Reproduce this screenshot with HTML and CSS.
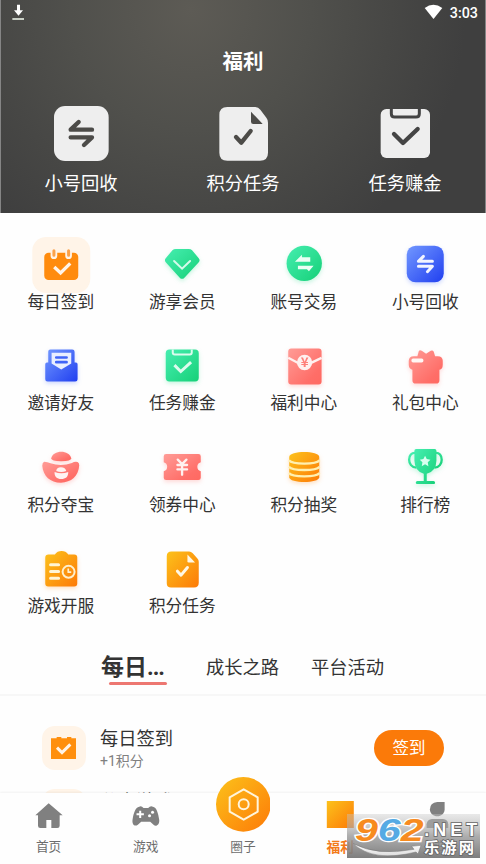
FILE: index.html
```html
<!DOCTYPE html>
<html lang="zh-CN">
<head>
<meta charset="utf-8">
<title>福利</title>
<link rel="stylesheet" href="styles.css">
</head>
<body>
<svg class="defs" width="0" height="0" aria-hidden="true">
  <defs>
    <linearGradient id="green" x1="0" y1="0" x2="1" y2="1"><stop offset="0" stop-color="#46eeb0"/><stop offset="1" stop-color="#16d078"/></linearGradient>
    <linearGradient id="blue" x1="0" y1="0" x2="1" y2="1"><stop offset="0" stop-color="#7298ff"/><stop offset="1" stop-color="#203ff0"/></linearGradient>
    <linearGradient id="red" x1="0" y1="0" x2="1" y2="1"><stop offset="0" stop-color="#ff9c97"/><stop offset=".75" stop-color="#ff6e68"/><stop offset="1" stop-color="#ff6961"/></linearGradient>
    <linearGradient id="gold" x1="0" y1="0" x2="1" y2="1"><stop offset="0" stop-color="#fcc21b"/><stop offset="1" stop-color="#fd7a07"/></linearGradient>
  </defs>
</svg>
<div class="app">
  <header class="hero">
    <div class="status">
      <svg class="download" viewBox="36 12 38 50"><path d="M51 14h9v17h9L55.500 47 42 31h9z" fill="#fff"/><path d="M37 54h35v6H37z" fill="#c9cfc6"/></svg>
      <span class="status-right">
        <svg class="wifi" viewBox="1272 12 57 46"><path d="M1274 24q26-19 53 0L1300.500 57z" fill="#fff"/></svg>
        <span class="clock">3:03</span>
      </span>
    </div>
    <h1>福利</h1>
    <nav class="shortcuts">
      <a class="shortcut">
        <svg viewBox="153 312 180 180"><rect x="162" y="318" width="164" height="165" rx="33" fill="#eee"/><path d="M276 389H212L236 366M212 412H276L252 435" fill="none" stroke="#4c4b48" stroke-width="13" stroke-linecap="round" stroke-linejoin="round"/></svg>
        <span>小号回收</span>
      </a>
      <a class="shortcut">
        <svg viewBox="639 312 180 180"><path d="M682 321H766Q775 321 781 329L799 353Q804 359 804 368V458Q804 482 780 482H682Q658 482 658 458V345Q658 321 682 321Z" fill="#eee"/><path d="M753 335V365Q753 372 760 372H788Z" fill="#4c4b48"/><path d="M708 411L724 428L752 393" fill="none" stroke="#4c4b48" stroke-width="13" stroke-linecap="round" stroke-linejoin="round"/></svg>
        <span>积分任务</span>
      </a>
      <a class="shortcut">
        <svg viewBox="1125 312 180 180"><rect x="1142" y="327" width="148" height="147" rx="17" fill="#eee"/><path d="M1174 326V341Q1174 351 1184 351H1248Q1258 351 1258 341V326" fill="none" stroke="#444" stroke-width="9"/><path d="M1182 402L1209 429L1253 387" fill="none" stroke="#444" stroke-width="13" stroke-linecap="round" stroke-linejoin="round"/></svg>
        <span>任务赚金</span>
      </a>
    </nav>
  </header>

  <section class="grid">
    <a class="cell">
      <svg viewBox="92.250 27 180 180"><rect x="96" y="36" width="174" height="168" rx="42" fill="#fff4e8"/><rect x="132" y="83" width="102" height="82" rx="13" fill="#ff8b0d"/><path d="M151 76V92a10 10 0 0 0 20 0V76M195 76V92a10 10 0 0 0 20 0V76" fill="#fff4e8"/><path d="M161 77V91M205 77V91" stroke="#fba24a" stroke-width="9" stroke-linecap="round"/><path d="M162 126L181 144L210 115" fill="none" stroke="#fff4e8" stroke-width="10"/></svg>
      <span>每日签到</span>
    </a>
    <a class="cell">
      <svg class="glow-green" viewBox="456.750 27 180 180"><path d="M528 72H567Q573 72 577 76L597 100Q602 106 597 112L554 158Q547 165 540 158L498 112Q493 106 498 100L518 76Q522 72 528 72Z" fill="url(#green)"/><path d="M523 108L547 131L571 108" fill="none" stroke="#d5faeb" stroke-width="6" stroke-linecap="round"/></svg>
      <span>游享会员</span>
    </a>
    <a class="cell">
      <svg class="glow-green" viewBox="92.250 27 180 180"><circle cx="183" cy="115" r="53" fill="url(#green)"/><path d="M155 110L176 89V97H201V110ZM211 122H164V133H191L197 139Z" fill="#eafff5"/></svg>
      <span>账号交易</span>
    </a>
    <a class="cell">
      <svg class="glow-blue" viewBox="456.750 27 180 180"><rect x="492" y="62" width="111" height="110" rx="27" fill="url(#blue)"/><path d="M569 109H527L542 94M527 124H569L554 140" fill="none" stroke="#f1f4ff" stroke-width="9" stroke-linecap="round" stroke-linejoin="round"/></svg>
      <span>小号回收</span>
    </a>

    <a class="cell">
      <svg class="glow-blue" viewBox="92.250 1.500 180 180"><path d="M150 42H216Q223 42 223 49V81H227Q232 81 232 86V131Q232 138 225 138H142Q135 138 135 131V86Q135 81 140 81H144V48Q144 42 150 42Z" fill="url(#blue)"/><path d="M154 52H213V84L183 102L154 84Z" fill="#e8eeff"/><path d="M168 66H199M168 80H199" stroke="#3f64f7" stroke-width="8" stroke-linecap="round"/></svg>
      <span>邀请好友</span>
    </a>
    <a class="cell">
      <svg class="glow-green" viewBox="456.750 1.500 180 180"><rect x="498" y="42" width="99" height="96" rx="11" fill="url(#green)"/><path d="M519 42V51Q519 57 525 57H570Q576 57 576 51V42" fill="none" stroke="#dcfbee" stroke-width="6"/><path d="M524 89L543 108L574 80" fill="none" stroke="#dcfbee" stroke-width="9"/></svg>
      <span>任务赚金</span>
    </a>
    <a class="cell">
      <svg class="glow-red" viewBox="92.250 1.500 180 180"><rect x="135" y="39" width="100" height="108" rx="9" fill="url(#red)"/><path d="M135 67L166 83M235 67L202 83" stroke="#fff0ef" stroke-width="7"/><circle cx="184" cy="81" r="23" fill="#fff0ef"/><text x="184" y="95" class="yen" font-size="40" fill="#ff7e78" text-anchor="middle">¥</text></svg>
      <span>福利中心</span>
    </a>
    <a class="cell">
      <svg class="glow-red" viewBox="456.750 1.500 180 180"><path d="M524 62L528 47Q531 42 537 46L550 55L564 46Q570 43 573 49L577 62H585Q600 62 600 76V87Q600 101 590 103V134Q590 144 580 144H519Q509 144 509 134V103Q498 100 498 87V76Q498 62 513 62Z" fill="url(#red)"/><rect x="506" y="69" width="36" height="12" rx="5" fill="#fff7f5"/></svg>
      <span>礼包中心</span>
    </a>

    <a class="cell">
      <svg class="glow-red" viewBox="92.250 6 180 180"><path d="M153 70C158 44 207 43 213 70Q214 78 183 79Q152 78 153 70Z" fill="url(#red)"/><path d="M132 80Q141 80 151 85Q183 96 215 84Q223 79 232 81Q237 83 237 91C235 123 213 143 182 143C150 143 129 123 126 92Q126 82 132 80Z" fill="url(#red)"/><path d="M168 108Q169 97 182 97Q196 98 198 108Q183 114 168 108ZM163 111Q183 119 204 111C204 126 196 132 183 132C170 132 162 125 163 111Z" fill="#fff4f2"/></svg>
      <span>积分夺宝</span>
    </a>
    <a class="cell">
      <svg class="glow-red" viewBox="456.750 6 180 180"><path d="M499 57H596Q603 57 603 64V82A14 14 0 0 0 603 109V128Q603 135 596 135H499Q492 135 492 128V109A14 14 0 0 0 492 82V64Q492 57 499 57Z" fill="url(#red)"/><path d="M534 74L547 87L560 74M547 87V119M533 90H562M533 103H562" fill="none" stroke="#fff1ef" stroke-width="7" stroke-linecap="round"/></svg>
      <span>领券中心</span>
    </a>
    <a class="cell">
      <svg class="glow-gold" viewBox="92.250 6 180 180"><path d="M138 66C138 46 228 46 228 66V127C228 146 138 146 138 127Z" fill="url(#gold)"/><path d="M137 76Q145 86 183 86T229 76M137 95Q145 105 183 105T229 95M137 114Q145 124 183 124T229 114" fill="none" stroke="#fff0b0" stroke-width="7"/></svg>
      <span>积分抽奖</span>
    </a>
    <a class="cell">
      <svg class="glow-green" viewBox="456.750 6 180 180"><path d="M520 54C492 49 492 98 521 98M576 54C604 49 604 98 575 98" fill="none" stroke="url(#green)" stroke-width="7"/><path d="M520 42H576Q581 42 581 47V77Q580 109 552 116V138H572Q577 138 577 143T572 147H524Q519 147 519 143T524 138H543V116Q516 108 515 77V47Q515 42 520 42Z" fill="url(#green)"/><path d="M547 62L552 72L563 74L555 82L557 94L547 88L537 94L539 82L531 74L542 72Z" fill="#d9fff0"/></svg>
      <span>排行榜</span>
    </a>

    <a class="cell">
      <svg class="glow-gold" viewBox="92.250 10.500 180 180"><path d="M145 57H164C172 43 196 43 204 57H222Q231 57 231 66V144Q231 153 222 153H144Q135 153 135 144V67Q135 57 145 57Z" fill="url(#gold)"/><path d="M151 88H175M151 108H175M151 128H175" stroke="#fff5d5" stroke-width="9" stroke-linecap="round"/><circle cx="205" cy="109" r="18" fill="none" stroke="#fff0cc" stroke-width="6"/><path d="M204 99V110H213" fill="none" stroke="#fff0cc" stroke-width="5"/></svg>
      <span>游戏开服</span>
    </a>
    <a class="cell">
      <svg viewBox="456.750 10.500 180 180"><path d="M515 48H568Q574 48 579 53L593 69Q597 73 597 79V142Q597 156 583 156H514Q501 156 501 143V62Q501 48 515 48Z" fill="url(#gold)"/><path d="M563 57V77Q563 81 567 81H586Z" fill="#fff8e5"/><path d="M533 107L544 119L563 96" fill="none" stroke="#fff8e5" stroke-width="9" stroke-linecap="round" stroke-linejoin="round"/></svg>
      <span>积分任务</span>
    </a>
  </section>

  <nav class="tabs">
    <a class="tab tab-active">每日<span class="dots">...</span></a>
    <a class="tab">成长之路</a>
    <a class="tab">平台活动</a>
  </nav>

  <section class="tasks">
    <div class="task">
      <svg class="task-icon" viewBox="126 258 132 132"><rect x="126" y="258" width="132" height="132" rx="38" fill="#fff4e8"/><path d="M153 295H170V291H184V295H201V291H214V295H228V357H153Z" fill="#ff8f0d"/><path d="M171 323L186 338L211 313" fill="none" stroke="#fff4e8" stroke-width="9"/></svg>
      <div class="task-copy"><strong>每日签到</strong><small>+1积分</small></div>
      <button>签到</button>
    </div>
    <div class="task">
      <svg class="task-icon" viewBox="126 258 132 132"><rect x="126" y="258" width="132" height="132" rx="38" fill="#fff4e8"/></svg>
      <div class="task-copy"><strong>分享游戏</strong></div>
    </div>
  </section>

  <nav class="dock">
    <a class="dock-item">
      <svg viewBox="98 105 96 96"><path d="M145 115L187 151H178V182Q178 189 171 189H153V165H138V189H120Q113 189 113 182V151H105Z" fill="#808080"/></svg>
      <span>首页</span>
    </a>
    <a class="dock-item">
      <svg viewBox="389.400 105 96 96"><path d="M417 125Q424 122 430 129H444Q450 122 458 125C469 126 474 145 477 164C479 179 467 187 460 179L450 170H423L413 179C403 187 395 177 397 164C400 145 406 126 417 125Z" fill="#808080"/><path d="M420 137V159M409 148H431" stroke="#fff" stroke-width="6"/><circle cx="457" cy="142" r="4.500" fill="#fff"/><circle cx="448" cy="152" r="4.500" fill="#fff"/></svg>
      <span>游戏</span>
    </a>
    <a class="dock-item">
      <svg class="orb" viewBox="646 36 164 164"><circle cx="728" cy="118" r="82" fill="url(#gold)"/><path d="M729 73L771 97V140L729 164L687 140V97Z" fill="none" stroke="#fff5dc" stroke-width="6" stroke-linejoin="round"/><circle cx="729" cy="118" r="15" fill="none" stroke="#fff5dc" stroke-width="6"/></svg>
      <span>圈子</span>
    </a>
    <a class="dock-item dock-active">
      <svg viewBox="102.600 105 96 96"><rect x="111" y="108" width="81" height="81" fill="url(#gold)"/></svg>
      <span>福利</span>
    </a>
    <a class="dock-item">
      <svg viewBox="394.200 105 96 96"><path d="M443 111H465V133C465 161 421 161 421 133Q421 113 443 111Z" fill="#808080"/><path d="M427 162H460Q475 163 476 178V189H411V178Q413 163 427 162Z" fill="#808080"/></svg>
      <span>我的</span>
    </a>
  </nav>

  <svg class="watermark" viewBox="171 147 399 132">
    <defs>
      <linearGradient id="veil" x1="0" y1="0" x2="0" y2="1"><stop offset="0" stop-color="#c8c8c8" stop-opacity=".4"/><stop offset=".5" stop-color="#999" stop-opacity=".8"/><stop offset="1" stop-color="#777" stop-opacity=".95"/></linearGradient>
      <linearGradient id="silver" x1="0" y1="0" x2="0" y2="1"><stop offset="0" stop-color="#fff"/><stop offset="1" stop-color="#ddd"/></linearGradient>
    </defs>
    <rect x="171" y="147" width="399" height="132" fill="url(#veil)"/>
    <text x="195" y="229" class="wm-number" textLength="206" lengthAdjust="spacingAndGlyphs"><tspan fill="#f78b1f">9</tspan><tspan fill="#55aae4">6</tspan><tspan fill="#f78b1f">2</tspan></text>
    <path d="M190 236Q262 274 372 253L365 244L393 241L384 267L378 261Q250 293 190 236Z" fill="url(#silver)" stroke="#777" stroke-width="1.500"/>
    <text x="403" y="213" class="wm-domain" textLength="159" lengthAdjust="spacing">.NET</text>
    <text x="402" y="265" class="wm-name" textLength="150" lengthAdjust="spacing">乐游网</text>
  </svg>
</div>
</body>
</html>
```

FILE: styles.css
```css
* { box-sizing: border-box; }
body {
  margin: 0;
  background: #fefefe;
  color: #333;
  font-family: Roboto, "Noto Sans CJK SC", sans-serif;
}
svg { display: block; }
.defs { position: absolute; }
.app {
  position: relative;
  display: flex;
  flex-direction: column;
  width: 486px;
  height: 864px;
  overflow: hidden;
}

.hero {
  flex: none;
  height: 213px;
  color: #fff;
  border: solid #858585;
  border-width: 0 1px;
  background: radial-gradient(circle at 190px 10px, #5d5b55 0, #50504c 120px, #474745 200px, #3f3f3f 275px);
}
.status {
  display: flex;
  justify-content: space-between;
  align-items: center;
  height: 24px;
  padding: 0 7px 0 11px;
}
.download { width: 12.700px; height: 16.700px; }
.status-right { display: flex; align-items: center; gap: 7px; }
.wifi { width: 19px; height: 15.300px; }
.clock { padding-top: 1px; font-size: 14.300px; font-weight: 500; line-height: 24px; }
h1 {
  margin: 23px 0 0;
  font-size: 20.500px;
  font-weight: 700;
  line-height: 30px;
  text-align: center;
}
.shortcuts {
  display: grid;
  grid-template-columns: repeat(3, 162px);
  margin: 27px -1px 0;
}
.shortcut { display: flex; flex-direction: column; align-items: center; }
.shortcut svg { width: 60px; height: 60px; }
.shortcut span { margin-top: 7px; font-size: 18.300px; line-height: 26px; }

.grid {
  flex: none;
  display: grid;
  grid-template-columns: repeat(4, 121.500px);
  grid-auto-rows: 101.500px;
  padding-top: 21px;
}
.cell { display: flex; flex-direction: column; align-items: center; }
.cell svg { width: 60px; height: 60px; }
.cell span { position: relative; margin-top: -3.500px; font-size: 16.700px; line-height: 24px; }
.glow-green { filter: drop-shadow(0 2px 2px #25db8640); }
.glow-blue { filter: drop-shadow(0 2px 2px #3d66ff40); }
.glow-red { filter: drop-shadow(0 2px 2px #ff6d6640); }
.glow-gold { filter: drop-shadow(0 2px 2px #ff8c1640); }
.yen { font-family: "Noto Sans CJK SC", sans-serif; font-weight: 700; }

.tabs {
  flex: none;
  display: flex;
  align-items: center;
  height: 56px;
  padding: 2px 0 0 101px;
  border-bottom: 2px solid #f7f7f7;
}
.tab { width: 105px; font-size: 18.300px; line-height: 28px; white-space: nowrap; }
.tab-active { position: relative; font-size: 23px; font-weight: 700; }
.dots { letter-spacing: -1px; }
.tab-active::after {
  content: "";
  position: absolute;
  left: 8px;
  top: 28px;
  width: 58px;
  height: 2.500px;
  border-radius: 2px;
  background: #ed7771;
}

.tasks { padding-top: 30px; }
.task {
  display: flex;
  align-items: flex-start;
  height: 63px;
  padding: 0 42px;
}
.task-icon { width: 44px; height: 44px; }
.task-copy { display: flex; flex-direction: column; margin: 1px 0 0 14px; }
.task strong { font-size: 18.300px; font-weight: 400; line-height: 24px; }
.task small { color: #808080; font-size: 14px; line-height: 20px; }
.task button {
  width: 70px;
  height: 36px;
  margin: 4px 0 0 auto;
  padding: 1px 0 0;
  border: 0;
  border-radius: 18px;
  color: #fff;
  background: #fb7a09;
  font: 400 16.500px/35px Roboto, "Noto Sans CJK SC", sans-serif;
}

.dock {
  position: absolute;
  left: 0;
  bottom: 0;
  display: grid;
  grid-template-columns: repeat(5, 97.200px);
  width: 486px;
  height: 71px;
  padding-top: 7px;
  background: #fefefe;
  box-shadow: 0 -1px 2px #0000000d;
}
.dock-item {
  position: relative;
  display: flex;
  flex-direction: column;
  justify-content: space-between;
  align-items: center;
  height: 57px;
  color: #6c6c6c;
  font-size: 12.700px;
  line-height: 20px;
}
.dock-item svg { width: 32px; height: 32px; }
.dock-item .orb { width: 54.700px; height: 54.700px; margin-top: -23px; }
.dock-active { color: #f37a1a; font-size: 13.700px; font-weight: 700; }

.watermark {
  position: absolute;
  left: 347px;
  top: 814px;
  width: 133px;
  height: 44px;
  overflow: visible;
}
.wm-number {
  font: italic 700 96px "Liberation Sans", sans-serif;
  stroke: #fff;
  stroke-width: 8px;
  paint-order: stroke;
}
.wm-domain {
  font: 700 54px "Liberation Sans", sans-serif;
  fill: #fff;
  stroke: #666;
  stroke-width: 5px;
  paint-order: stroke;
}
.wm-name {
  font: 700 46px "Noto Sans CJK SC", sans-serif;
  fill: #fff;
  stroke: #666;
  stroke-width: 5px;
  paint-order: stroke;
}
```
